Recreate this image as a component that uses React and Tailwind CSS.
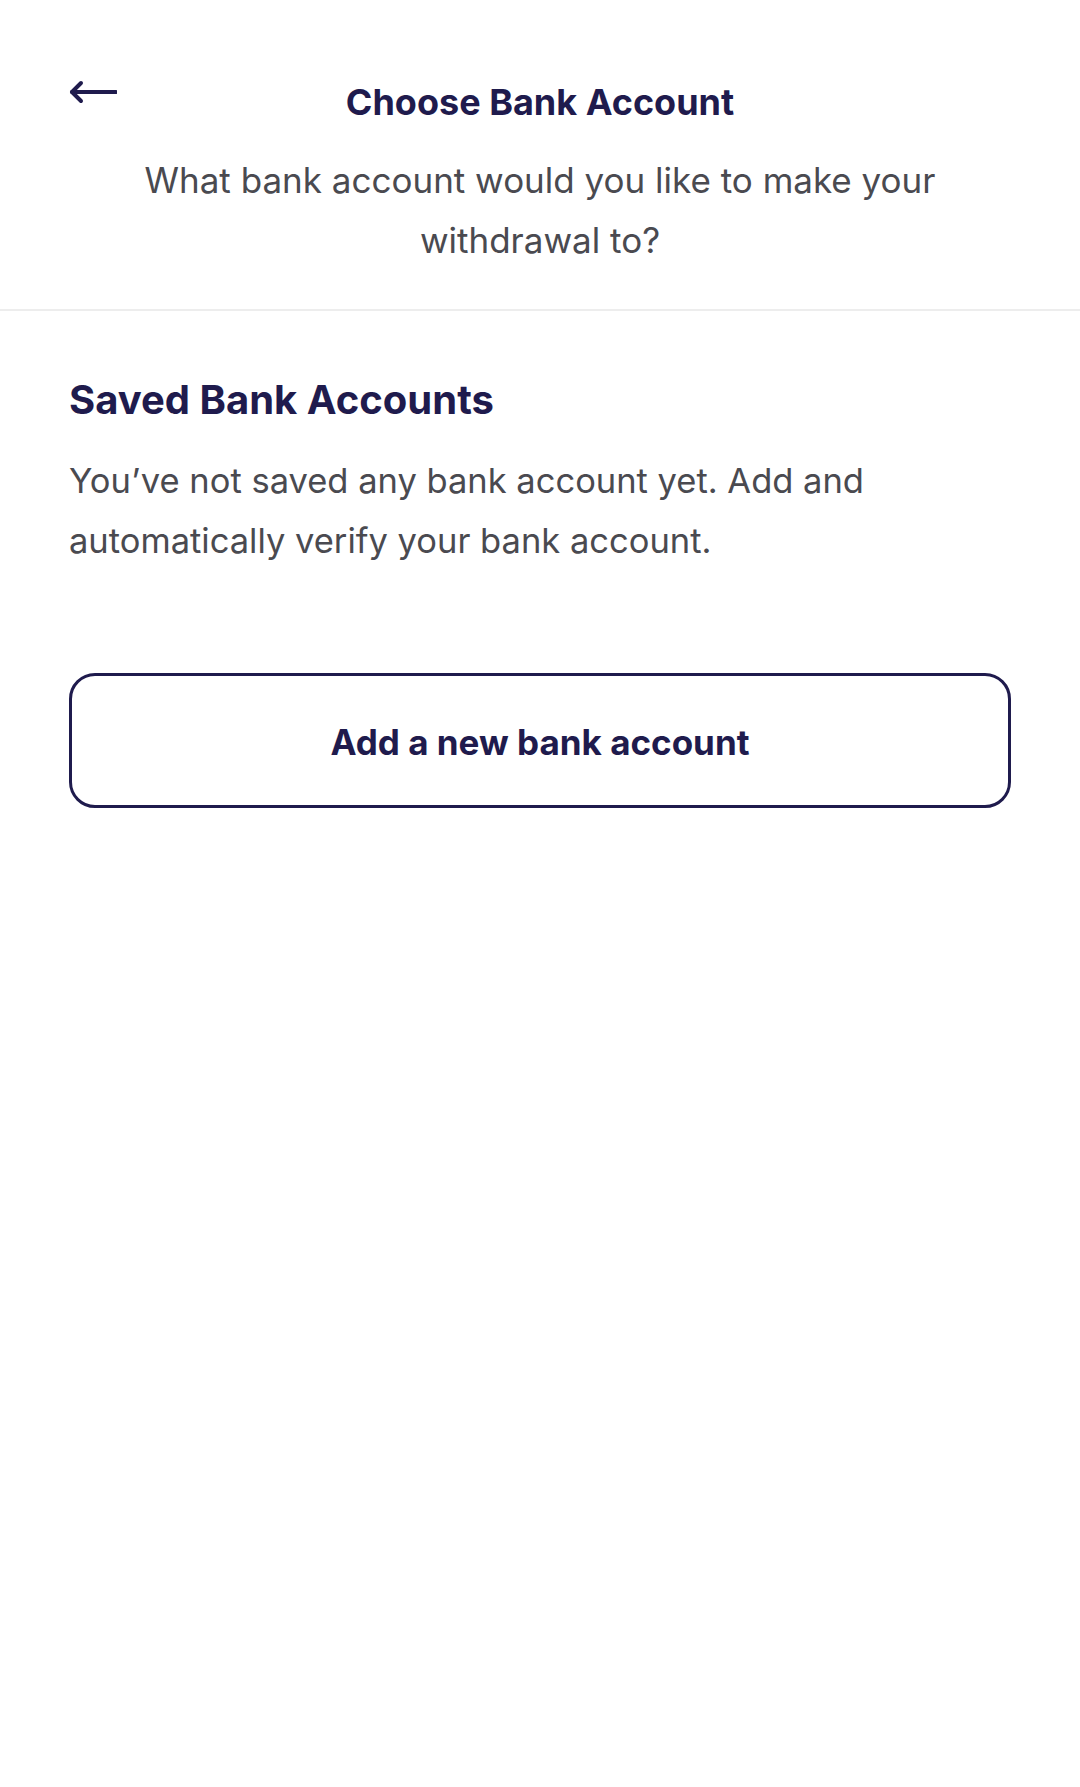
import React from "react";

const BackArrow = () => (
  <svg width="48" height="24" viewBox="0 0 48 24" fill="none">
    <path d="M3 12H47" stroke="#1f1b4d" strokeWidth="4" strokeLinecap="round" />
    <path d="M12 3L3 12L12 21" stroke="#1f1b4d" strokeWidth="4" strokeLinecap="round" strokeLinejoin="round" />
  </svg>
);

const App = () => {
  return (
    <div className="min-h-[1787px] bg-white" style={{ fontFamily: "Inter, 'Noto Sans', sans-serif" }}>
      <header className="border-b-2 border-[#ededed] pt-[80px] pb-[39px]">
        <div className="grid grid-cols-[1fr_auto_1fr] items-start px-[69px]">
          <button className="justify-self-start">
            <BackArrow />
          </button>
          <h1 className="text-[36px] leading-[44px] font-bold text-[#1f1b4d]">Choose Bank Account</h1>
          <div />
        </div>
        <p className="mx-auto mt-[26px] max-w-[840px] text-center text-[35px] leading-[60px] text-[#4a4a50]">
          What bank account would you like to make your withdrawal to?
        </p>
      </header>

      <main className="px-[69px] pt-[64px]">
        <h2 className="text-[40px] leading-[50px] font-bold text-[#1f1b4d]">Saved Bank Accounts</h2>
        <p className="mt-[26px] text-[34.5px] leading-[60px] text-[#4a4a50]">
          You’ve not saved any bank account yet. Add and automatically verify your bank account.
        </p>
        <button className="mt-[102px] flex h-[135px] w-full items-center justify-center rounded-[26px] border-[3px] border-[#1f1b4d] pt-[4px] text-[35px] font-bold text-[#1f1b4d]">
          Add a new bank account
        </button>
      </main>
    </div>
  );
};

export default App;
